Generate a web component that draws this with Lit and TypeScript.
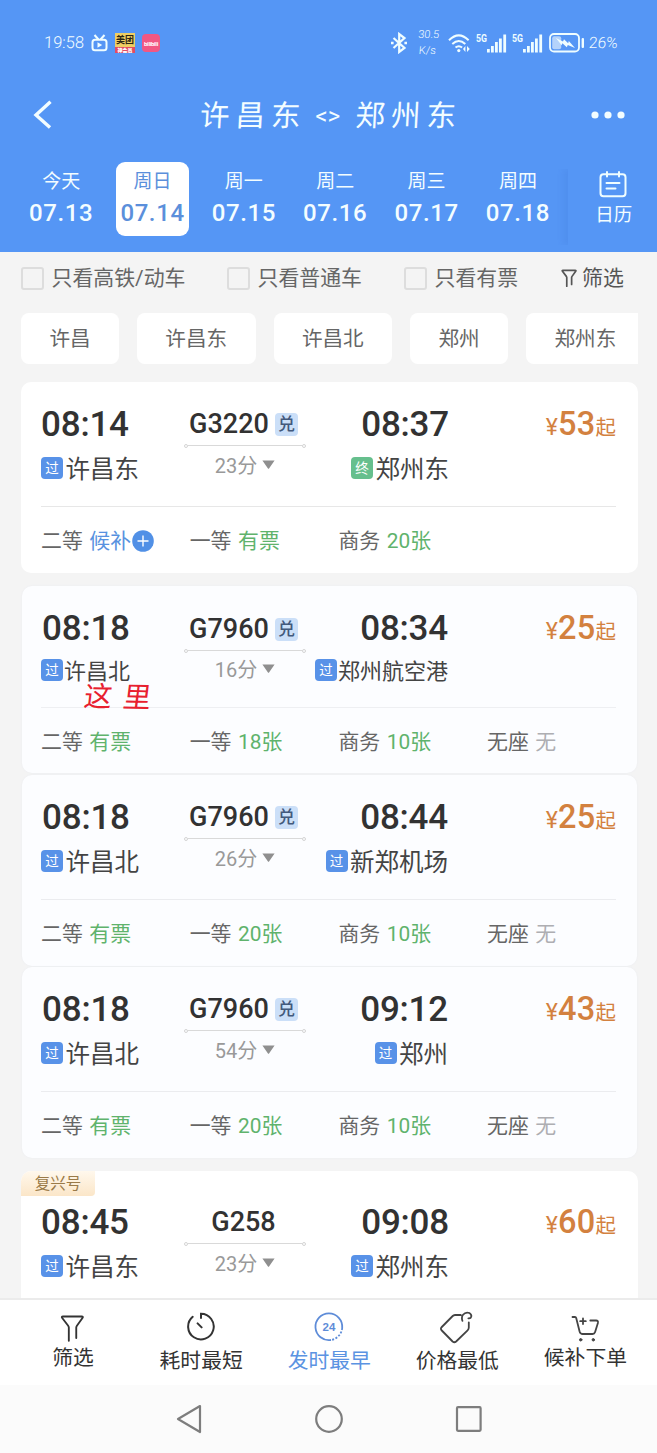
import { LitElement, html, css, svg, nothing } from "lit";
import { customElement, property } from "lit/decorators.js";
import { classMap } from "lit/directives/class-map.js";

interface Seat { name: string; left: string; kind: "ok" | "wait" | "none"; }
interface Train {
  dep: string; arr: string; from: string; to: string; end?: boolean;
  no: string; redeem: boolean; mins: string; price: string;
  layout: "solo" | "compact" | "grouped" | "last";
  tag?: string; note?: string; seats: Seat[];
}

const seats = (...rows: [string, string, Seat["kind"]][]): Seat[] =>
  rows.map(([name, left, kind]) => ({ name, left, kind }));

const TRAINS: Train[] = [
  { dep: "08:14", arr: "08:37", from: "许昌东", to: "郑州东", end: true, no: "G3220", redeem: true, mins: "23", price: "53", layout: "solo",
    seats: seats(["二等", "候补", "wait"], ["一等", "有票", "ok"], ["商务", "20张", "ok"]) },
  { dep: "08:18", arr: "08:34", from: "许昌北", to: "郑州航空港", no: "G7960", redeem: true, mins: "16", price: "25", layout: "compact", note: "这里",
    seats: seats(["二等", "有票", "ok"], ["一等", "18张", "ok"], ["商务", "10张", "ok"], ["无座", "无", "none"]) },
  { dep: "08:18", arr: "08:44", from: "许昌北", to: "新郑机场", no: "G7960", redeem: true, mins: "26", price: "25", layout: "grouped",
    seats: seats(["二等", "有票", "ok"], ["一等", "20张", "ok"], ["商务", "10张", "ok"], ["无座", "无", "none"]) },
  { dep: "08:18", arr: "09:12", from: "许昌北", to: "郑州", no: "G7960", redeem: true, mins: "54", price: "43", layout: "grouped",
    seats: seats(["二等", "有票", "ok"], ["一等", "20张", "ok"], ["商务", "10张", "ok"], ["无座", "无", "none"]) },
  { dep: "08:45", arr: "09:08", from: "许昌东", to: "郑州东", no: "G258", redeem: false, mins: "23", price: "60", layout: "last", tag: "复兴号", seats: [] },
];

@customElement("train-card")
class TrainCard extends LitElement {
  @property({ attribute: false }) train!: Train;

  static styles = css`
    :host { display: block; --row: 44px; --top: 20px; --h: 191px; }
    .card { box-sizing: border-box; position: relative; margin: 0 19px 0 21px; height: var(--h); background: #fff; border-radius: 10px; padding: var(--top) 22px 0 20px; color: #323232; }
    .compact, .grouped { margin: 0 20px 0 22px; background: #fcfdff; padding-right: 21px; padding-left: 19px; box-shadow: 0 0 2px #e9ebef; }
    .compact { --row: 42px; --top: 21px; --h: 187px; }
    .last { --top: 29px; --h: 140px; }
    .top { display: grid; grid-template-columns: 143px 122px 143px 1fr; }
    .compact .top, .grouped .top { grid-template-columns: 143px 122px 142px 1fr; }
    .time { height: var(--row); line-height: calc(var(--row) + 2px); font-size: 35px; font-weight: 500; letter-spacing: -.2px; white-space: nowrap; }
    .compact .time, .grouped .time { padding-left: 1px; }
    .station { height: var(--row); display: flex; align-items: center; gap: 2.5px; font-size: 24.5px; color: #444; white-space: nowrap; line-height: 30px; }
    .station .txt { padding-top: 3px; }
    .compact .station { font-size: 22px; gap: 1px; }
    .arrive { display: flex; flex-direction: column; align-items: flex-end; }
    .badge { flex: none; width: 22px; height: 22px; border-radius: 4px; background: #5892e8; color: #fff; font-size: 13.5px; line-height: 22px; text-align: center; }
    .badge.end { background: #66bf8d; }
    .no { box-sizing: border-box; height: 42px; padding-top: 2px; display: flex; align-items: center; justify-content: center; gap: 6px; font-size: 27px; font-weight: 500; margin-left: -3px; }
    .redeem { width: 23px; height: 23px; border-radius: 4px; background: #cbdff8; color: #43597c; font-size: 17px; line-height: 23px; text-align: center; font-weight: 500; }
    .line { display: flex; align-items: center; height: 3px; }
    .line::before, .line::after { content: ""; width: 2px; height: 2px; border: 1px solid #d4d4d4; border-radius: 50%; }
    .line i { flex: 1; height: 1px; background: #d9d9d9; }
    .dur { display: flex; align-items: center; justify-content: center; gap: 5px; height: 34px; font-size: 20px; color: #999; }
    .compact .dur { height: 33px; }
    .price { height: var(--row); line-height: var(--row); text-align: right; color: #d3813f; font-size: 32.5px; font-weight: 500; white-space: nowrap; letter-spacing: .3px; }
    .price small { font-size: 20.5px; font-weight: 400; letter-spacing: 0; }
    .price .yen { font-size: 23px; }
    .rule { height: 1px; background: #e7e7e7; margin-top: 16px; }
    .compact .rule { background: #eeeff2; }
    .grouped .rule { background: #ebecef; }
    .seats { display: grid; grid-template-columns: repeat(4, 148.7px); height: 67px; align-items: center; font-size: 20.9px; color: #666; }
    .seat { display: flex; align-items: center; gap: 6.5px; white-space: nowrap; line-height: 30px; }
    .ok { color: #5fb36c; } .wait { color: #5892e0; display: flex; align-items: center; gap: 1px; } .none { color: #aeaeb2; }
    .tag { position: absolute; left: 0; top: 0; width: 74px; height: 25px; box-sizing: border-box; border-radius: 10px 0 4px 0; background: linear-gradient(#fff8ed, #fbe6c8); color: #9a7a48; font-size: 15.5px; line-height: 26px; text-align: center; }
    .note { position: absolute; left: 62px; top: 92px; color: #e8202f; font-size: 28px; line-height: 40px; letter-spacing: 11px; transform: skewX(-6deg) rotate(1deg); }
  `;

  station(name: string, end = false) {
    return html`<div class="station"><span class=${classMap({ badge: true, end })}>${end ? "终" : "过"}</span><span class="txt">${name}</span></div>`;
  }

  render() {
    const t = this.train;
    return html`<div class="card ${t.layout}">
      ${t.tag ? html`<span class="tag">${t.tag}</span>` : nothing}
      <div class="top">
        <div><div class="time">${t.dep}</div>${this.station(t.from)}</div>
        <div>
          <div class="no"><span>${t.no}</span>${t.redeem ? html`<span class="redeem">兑</span>` : nothing}</div>
          <div class="line"><i></i></div>
          <div class="dur"><span>${t.mins}分</span><svg width="13" height="9" viewBox="0 0 13 9"><path d="M.4.5h12.2L7.2 8.2q-.7 1-1.4 0z" fill="#8f8f8f"/></svg></div>
        </div>
        <div class="arrive"><div class="time">${t.arr}</div>${this.station(t.to, t.end)}</div>
        <div class="price"><small class="yen">¥</small>${t.price}<small>起</small></div>
      </div>
      ${t.seats.length ? html`<div class="rule"></div><div class="seats">${t.seats.map((s) => html`<div class="seat"><span>${s.name}</span><span class=${s.kind}>${s.left}${s.kind === "wait"
        ? html`<svg width="22" height="22" viewBox="0 0 22 22"><circle cx="11" cy="11" r="10.8" fill="#5190e6"/><path d="M5.5 11h11M11 5.5v11" stroke="#fff" stroke-width="1.4"/></svg>` : nothing}</span></div>`)}</div>` : nothing}
      ${t.note ? html`<span class="note">${t.note}</span>` : nothing}
    </div>`;
  }
}

const signal = html`<svg width="31" height="20" viewBox="0 0 31 20" fill="#effdff"><text x="0" y="8.5" font-size="10.5" font-weight="700" textLength="11" lengthAdjust="spacingAndGlyphs">5G</text><rect x="11" y="16" width="2.8" height="3.5"/><rect x="15" y="13" width="2.8" height="6.5"/><rect x="19" y="9" width="2.8" height="10.5"/><rect x="23" y="5.5" width="2.8" height="14"/><rect x="27.3" y="1.5" width="2.8" height="18"/></svg>`;

const funnel = svg`<path d="M3.2 1.5h20.2q2 0 .8 1.7l-6 8.3q-.7 1-.7 2v11.2M3.2 1.5q-2 0-.8 1.7l6.4 8.3q.7 1 .7 2v14.2" fill="none" stroke="currentColor" stroke-linecap="round"/>`;

const TABS = [
  { label: "筛选", high: true, icon: html`<svg width="26" height="28" viewBox="0 0 28 30" stroke-width="2">${funnel}</svg>` },
  { label: "耗时最短", high: false, icon: html`<svg width="30" height="30" viewBox="0 0 30 30" fill="none" stroke="#333" stroke-width="2" stroke-linecap="round"><path d="M15 6V1.8A12.8 12.8 0 1 1 6.7 4.8M11.6 11.4l4 4"/></svg>` },
  { label: "发时最早", high: false, active: true, icon: html`<svg width="30" height="30" viewBox="0 0 30 30" fill="none" stroke="#5e8cd8" stroke-width="1.8"><path d="M17 28A13.4 13.4 0 1 1 28.2 16"/><path d="M28.2 16A13.4 13.4 0 0 1 17 28" stroke-dasharray="2 1.6"/><text x="15" y="18.9" font-family="Liberation Sans" font-size="11.5" font-weight="700" fill="#5e8cd8" stroke="none" text-anchor="middle">24</text></svg>` },
  { label: "价格最低", high: false, icon: html`<svg width="34" height="34" viewBox="0 0 34 34" fill="none" stroke="#444" stroke-width="1.8" stroke-linecap="round" stroke-linejoin="round"><path d="M22.4 10.8q-1.2-3.6.6-6 2.6-3.2 6.4-1.8 3 2 1.4 4.6-.8.9-2.4.7M20.8 5H15q-1.4.1-2.3 1L1.8 17q-1.8 1.8 0 3.5l10.8 11q1.8 1.5 3.5 0l11.5-11.2q1.2-1.2 1.2-2.8v-5.2"/></svg>` },
  { label: "候补下单", high: true, icon: html`<svg width="30" height="28" viewBox="0 0 30 28" fill="none" stroke="#444" stroke-width="1.8" stroke-linecap="round" stroke-linejoin="round"><path d="M2.5 2H5q.9 0 1.2 1l3.4 13.5q.7 2.5 3 2.5h9.9q2 0 2.6-2l2.8-9q.5-2.5-1.8-2.5H20.3M10.2 6.2h5.6M13 3.4V9"/><circle cx="10.7" cy="24.8" r="1.2" fill="#444" stroke-width="1"/><circle cx="23.3" cy="24.8" r="1.2" fill="#444" stroke-width="1"/></svg>` },
];

const DAYS = [["今天", "07.13"], ["周日", "07.14"], ["周一", "07.15"], ["周二", "07.16"], ["周三", "07.17"], ["周四", "07.18"]];

@customElement("app-root")
class AppRoot extends LitElement {
  static styles = css`
    :host { display: flex; flex-direction: column; width: 657px; height: 1453px; overflow: hidden; background: #f4f4f4; font-family: Roboto, "Noto Sans CJK SC", sans-serif; }
    svg { display: block; flex: none; }
    .head { flex: none; height: 252px; background: #5596f5; color: #f3fdff; }
    .status { height: 85px; display: flex; align-items: center; padding: 0 39px 0 44px; box-sizing: border-box; font-size: 17px; font-weight: 300; }
    .clock { width: 47px; font-size: 16.5px; transform: skewX(-2deg); }
    .apps { display: flex; gap: 7px; align-items: center; flex: 1; }
    .mt { width: 20px; height: 20px; background: #efce63; color: #2c2513; font-size: 9px; font-weight: 700; line-height: 14px; text-align: center; overflow: hidden; }
    .mt b { display: block; background: #e34c63; color: #fff; font-size: 5px; line-height: 6px; height: 6px; }
    .bl { width: 18px; height: 18px; border-radius: 4px; background: #f25783; color: #fff; font-size: 6px; letter-spacing: -.3px; font-weight: 700; line-height: 19px; text-align: center; overflow: hidden; }
    .speed { width: 26px; text-align: center; font-size: 11px; line-height: 16px; margin: 0 7px 0 7px; transform: skewX(-5deg); }
    .sig { margin-left: 5px; }
    .batt { margin: 0 4px 0 6px; }
    .pct { width: 29px; transform: skewX(-5deg); white-space: nowrap; font-size: 15.5px; }
    .title { height: 60px; display: flex; align-items: center; padding: 0 32px; justify-content: space-between; }
    .name { display: flex; gap: 13px; font-size: 29.5px; font-weight: 400; letter-spacing: 6px; transform: skewX(-3deg); line-height: 44px; white-space: nowrap; margin-left: 18px; padding-top: 2px; }
    .name b { font-weight: 400; letter-spacing: 0; font-size: 24px; width: 27px; margin-left: -4px; }
    .dates { display: flex; height: 107px; padding-left: 15.5px; box-sizing: border-box; }
    .day { width: 91.35px; height: 74px; margin-top: 17px; display: flex; justify-content: center; }
    .pill { width: 73px; height: 74px; border-radius: 9px; box-sizing: border-box; padding-top: 5px; display: flex; flex-direction: column; align-items: center; }
    .on { background: #fff; color: #5b8fdb; }
    .wk { font-size: 19px; line-height: 29px; }
    .dt { font-size: 24px; line-height: 34px; font-weight: 500; letter-spacing: .6px; }
    .cal { flex: 1; height: 76px; margin: 24px 0 0 4px; display: flex; flex-direction: column; align-items: center; font-size: 18.5px; line-height: 28px; box-shadow: -4px 0 7px rgba(40,90,190,.12); clip-path: inset(0 0 0 -14px); }
    .cal svg { margin: 2px 0 3px 1px; }
    .cal span { margin-left: 3px; }
    .filters { height: 54px; flex: none; display: flex; align-items: center; padding: 0 0 2px 21px; box-sizing: border-box; font-size: 20.9px; color: #666; white-space: nowrap; line-height: 28px; }
    .check { display: flex; align-items: center; gap: 7.5px; }
    .check i { box-sizing: border-box; width: 23px; height: 23px; border: 2px solid #ddd; border-radius: 3px; }
    .f1 { width: 206px; } .f2 { width: 177px; } .f3 { width: 157px; }
    .sift { display: flex; align-items: center; gap: 4px; color: #555; }
    .chips { flex: none; display: flex; gap: 18px; width: 617px; margin: 7px 0 18px 21px; overflow: hidden; font-size: 20.6px; color: #666; }
    .chip { flex: none; box-sizing: border-box; height: 51px; padding: 0 28.4px; background: #fff; border-radius: 8px; line-height: 53px; white-space: nowrap; }
    .list { flex: none; height: 916px; overflow: hidden; display: flex; flex-direction: column; }
    train-card { flex: none; }
    .gap13 { margin-bottom: 13px; } .gap2 { margin-bottom: 2px; } .gap1 { margin-bottom: 1px; }
    .tabs { flex: none; height: 87px; box-sizing: border-box; border-top: 2px solid #ebebeb; background: #fff; display: flex; padding-left: 9px; }
    .tab { width: 128.1px; display: flex; flex-direction: column; align-items: center; font-size: 20.8px; color: #333; line-height: 30px; }
    .ico { height: 46px; display: flex; align-items: center; justify-content: center; padding-top: 8px; box-sizing: border-box; }
    .ico.hi { height: 43px; padding-top: 14px; }
    .active { color: #5b93e2; }
    .nav { flex: 1; background: #fbfbfb; display: flex; justify-content: center; align-items: center; gap: 112px; }
  `;

  render() {
    const gaps = ["gap13", "gap2", "gap1", "gap13", ""];
    return html`
      <div class="head">
        <div class="status">
          <span class="clock">19:58</span>
          <div class="apps">
            <svg width="17" height="18" viewBox="0 0 17 18" fill="none" stroke="#effdff" stroke-width="2"><rect x="1.5" y="5.8" width="14" height="10.5" rx="2.5"/><path d="M3.5 1l4 4.5M13.5 1l-4 4.5" /><path d="M6.5 8.2v5.6l4.7-2.8z" fill="#effdff" stroke="none"/></svg>
            <div class="mt">美团<b>神会员</b></div>
            <div class="bl">bilibili</div>
          </div>
          <svg width="18" height="22" viewBox="0 0 18 22" fill="none" stroke="#effdff" stroke-width="2.2"><path d="M3.5 6l11 10-5.3 4V2l5.3 4-11 10"/><path d="M1 11h2.6M14.4 11H17" stroke-width="2.6"/></svg>
          <div class="speed">30.5<br>K/s</div>
          <svg width="23" height="20" viewBox="0 0 23 20" fill="none" stroke="#effdff" stroke-width="2"><path d="M1 7.2q9.7-9.7 19.6 0M4.3 11q6.5-6 13 0M7.5 14.6q3.3-2.8 6.6 0"/><circle cx="10.8" cy="17.6" r="1.6" fill="#effdff" stroke="none"/><path d="M15 16l2.4-3v6zM19 13v6l2.8-3z" fill="#effdff" stroke="none"/></svg>
          <div class="sig">${signal}</div><div class="sig">${signal}</div>
          <svg class="batt" width="36" height="20" viewBox="0 0 36 20"><rect x="1" y="1" width="29" height="17.5" rx="4" fill="none" stroke="#effdff" stroke-width="1.8"/><rect x="3.2" y="3.2" width="9" height="13" rx="2" fill="#b4d3fb"/><path d="M7 5l7 3.4 1-2.2 4.2 4 .6-2.2L26 15l-7.2-3-1 2.2-4.4-4-.8 2z" fill="#effdff"/><rect x="32.6" y="5" width="2.4" height="10" rx="1" fill="#effdff"/></svg>
          <span class="pct">26%</span>
        </div>
        <div class="title">
          <svg width="22" height="30" viewBox="0 0 22 30"><path d="M18.5 1.8L4 15l14 12.5" fill="none" stroke="#f3fdff" stroke-width="3.4"/></svg>
          <div class="name"><span>许昌东</span><b>&lt;&gt;</b><span>郑州东</span></div>
          <svg width="34" height="8" viewBox="0 0 34 8" fill="#f3fdff"><circle cx="4" cy="4" r="3.6"/><circle cx="17" cy="4" r="3.6"/><circle cx="30" cy="4" r="3.6"/></svg>
        </div>
        <div class="dates">
          ${DAYS.map(([w, d], i) => html`<div class="day"><div class=${classMap({ pill: true, on: i === 1 })}><span class="wk">${w}</span><span class="dt">${d}</span></div></div>`)}
          <div class="cal"><svg width="28" height="27" viewBox="0 0 28 27" fill="none" stroke="#effdff" stroke-width="2" stroke-linecap="round"><rect x="1.5" y="3.2" width="25" height="22" rx="3"/><path d="M8 1v4.5M20 1v4.5M7.5 12h13M7.5 17.5h9"/></svg><span>日历</span></div>
        </div>
      </div>
      <div class="filters">
        <div class="check f1"><i></i><span>只看高铁/动车</span></div>
        <div class="check f2"><i></i><span>只看普通车</span></div>
        <div class="check f3"><i></i><span>只看有票</span></div>
        <div class="sift"><svg width="17" height="19" viewBox="0 0 28 30" stroke-width="2.8">${funnel}</svg><span>筛选</span></div>
      </div>
      <div class="chips">${["许昌", "许昌东", "许昌北", "郑州", "郑州东"].map((c) => html`<span class="chip">${c}</span>`)}</div>
      <div class="list">${TRAINS.map((t, i) => html`<train-card class=${gaps[i]} .train=${t}></train-card>`)}</div>
      <div class="tabs">${TABS.map((t) => html`<div class=${classMap({ tab: true, active: !!t.active })}><div class=${classMap({ ico: true, hi: t.high })}>${t.icon}</div><span>${t.label}</span></div>`)}</div>
      <div class="nav">
        <svg width="28" height="30" viewBox="0 0 28 30" fill="none" stroke="#7d7d7d" stroke-width="2.2" stroke-linejoin="round"><path d="M25 2L3 15l22 13z"/></svg>
        <svg width="28" height="28" viewBox="0 0 28 28" fill="none" stroke="#7d7d7d" stroke-width="2.2"><circle cx="14" cy="14" r="12.8"/></svg>
        <svg width="28" height="26" viewBox="0 0 28 26" fill="none" stroke="#7d7d7d" stroke-width="2.2"><rect x="2" y="1.2" width="23.6" height="23.6" rx="1"/></svg>
      </div>`;
  }
}
